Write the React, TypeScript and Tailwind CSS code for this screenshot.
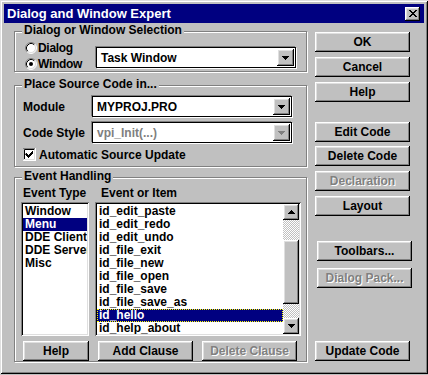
import React from 'react';

const raised =
  'bg-[#c0c0c0] shadow-[inset_-1px_-1px_0_#000,inset_1px_1px_0_#fff,inset_-2px_-2px_0_#808080,inset_2px_2px_0_#dfdfdf]';
const sunken =
  'shadow-[inset_1px_1px_0_#808080,inset_-1px_-1px_0_#fff,inset_2px_2px_0_#000,inset_-2px_-2px_0_#dfdfdf]';
const checker =
  'bg-[image:repeating-conic-gradient(#fff_0_25%,#c0c0c0_0_50%)] bg-[length:2px_2px]';
const disabledText = 'text-[#808080] [text-shadow:1px_1px_0_#fff]';

function Arrow({ up, disabled }: { up?: boolean; disabled?: boolean }) {
  return (
    <svg width="7" height="4" viewBox="0 0 7 4" className={up ? 'rotate-180' : ''}>
      <path
        d="M0 0h7v1h-1v1h-1v1h-1v1h-1v-1h-1v-1h-1v-1h-1z"
        fill={disabled ? '#808080' : '#000'}
      />
    </svg>
  );
}

function Button({
  label,
  disabled,
  className = '',
}: {
  label: string;
  disabled?: boolean;
  className?: string;
}) {
  return (
    <div
      className={`flex h-[20px] items-center justify-center text-[12px] font-bold ${raised} ${
        disabled ? disabledText : 'text-black'
      } ${className}`}
    >
      {label}
    </div>
  );
}

function Group({
  title,
  className = '',
  children,
}: {
  title: string;
  className?: string;
  children: React.ReactNode;
}) {
  return (
    <div
      className={`relative border border-[#808080] shadow-[inset_1px_1px_0_#fff,1px_1px_0_#fff] ${className}`}
    >
      <span className="absolute -top-[9px] left-[7px] bg-[#c0c0c0] px-[2px] text-[12px] leading-[14px] font-bold">
        {title}
      </span>
      {children}
    </div>
  );
}

function Combo({
  value,
  disabled,
  className = '',
}: {
  value: string;
  disabled?: boolean;
  className?: string;
}) {
  return (
    <div
      className={`flex h-[21px] w-[200px] items-center border border-black bg-white shadow-[-1px_-1px_0_#808080,1px_1px_0_#fff] ${className}`}
    >
      <span
        className={`flex-1 pl-[4px] text-[12px] font-bold ${
          disabled ? 'text-[#808080]' : 'text-black'
        }`}
      >
        {value}
      </span>
      <div className={`mr-[1px] flex h-[17px] w-[17px] items-center justify-center ${raised}`}>
        <Arrow disabled={disabled} />
      </div>
    </div>
  );
}

function Radio({ label, checked }: { label: string; checked?: boolean }) {
  return (
    <div className="flex h-[16px] items-center gap-[1px] text-[12px] font-bold tracking-[-0.3px]">
      <svg width="12" height="12" viewBox="0 0 12 12">
        <circle cx="6" cy="6" r="5" fill="#fff" />
        <path d="M2.11 9.89A5.5 5.5 0 0 1 9.89 2.11" fill="none" stroke="#808080" />
        <path d="M9.89 2.11A5.5 5.5 0 0 1 2.11 9.89" fill="none" stroke="#fff" />
        <path d="M2.82 9.18A4.5 4.5 0 0 1 9.18 2.82" fill="none" stroke="#000" />
        <path d="M9.18 2.82A4.5 4.5 0 0 1 2.82 9.18" fill="none" stroke="#dfdfdf" />
        {checked && <circle cx="6" cy="6" r="2" fill="#000" />}
      </svg>
      <span>{label}</span>
    </div>
  );
}

const eventTypes = ['Window', 'Menu', 'DDE Client', 'DDE Server', 'Misc'];
const events = [
  'id_edit_paste',
  'id_edit_redo',
  'id_edit_undo',
  'id_file_exit',
  'id_file_new',
  'id_file_open',
  'id_file_save',
  'id_file_save_as',
  'id_hello',
  'id_help_about',
];

export default function App() {
  return (
    <div className="h-[375px] w-[428px] overflow-hidden bg-[#c0c0c0] font-['Liberation_Sans',Arial,sans-serif] text-black">
      <div className="flex h-[374px] w-[428px] flex-col px-[4px] pt-[4px] shadow-[inset_1px_1px_0_#dfdfdf,inset_-1px_-1px_0_#000,inset_2px_2px_0_#fff,inset_-2px_-2px_0_#808080]">
        {/* title bar */}
        <div className="flex h-[19px] items-center bg-[#000080] pl-[3px]">
          <span className="flex-1 text-[13px] font-bold text-white">Dialog and Window Expert</span>
          <div className={`mr-[4px] flex h-[14px] w-[15px] items-center justify-center ${raised}`}>
            <svg width="8" height="7" viewBox="0 0 8 7">
              <path
                d="M0 0h2v1h1v1h2v-1h1v-1h2v1h-1v1h-1v1h-1v1h1v1h1v1h1v1h-2v-1h-1v-1h-2v1h-1v1h-2v-1h1v-1h1v-1h1v-1h-1v-1h-1v-1h-1z"
                fill="#000"
              />
            </svg>
          </div>
        </div>

        <div className="flex">
          {/* left column */}
          <div className="ml-[10px] flex w-[293px] flex-col">
            <Group title="Dialog or Window Selection" className="mt-[8px] h-[41px]">
              <div className="flex pt-[8px] pl-[10px]">
                <div className="flex w-[71px] flex-col">
                  <Radio label="Dialog" />
                  <Radio label="Window" checked />
                </div>
                <Combo value="Task Window" className="mt-[7px]" />
              </div>
            </Group>

            <Group title="Place Source Code in..." className="mt-[13px] h-[82px]">
              <div className="flex flex-col gap-[5px] pt-[10px] pl-[8px] text-[12px] font-bold">
                <div className="flex items-center">
                  <span className="w-[69px]">Module</span>
                  <Combo value="MYPROJ.PRO" />
                </div>
                <div className="flex items-center">
                  <span className="w-[69px]">Code Style</span>
                  <Combo value="vpi_Init(...)" disabled />
                </div>
                <div className="flex h-[13px] items-center gap-[3px]">
                  <svg width="13" height="13" viewBox="0 0 13 13">
                    <rect x="0" y="0" width="13" height="13" fill="#fff" />
                    <path d="M0 12.5V0.5h12.5" fill="none" stroke="#808080" />
                    <path d="M0.5 13V12.5h12V0" fill="none" stroke="#fff" />
                    <path d="M1.5 11V1.5h10" fill="none" stroke="#000" />
                    <path d="M1.5 11.5h10v-10" fill="none" stroke="#dfdfdf" />
                    <path d="M3 5h1v1h1v1h1v-1h1v-1h1v-1h1v-1h1v3h-1v1h-1v1h-1v1h-1v1h-1v-1h-1v-1h-1v-1h-1z" fill="#000" />
                  </svg>
                  <span>Automatic Source Update</span>
                </div>
              </div>
            </Group>

            <Group title="Event Handling" className="mt-[10px] h-[185px]">
              <div className="flex flex-col pt-[9px] text-[12px] font-bold">
                <div className="flex h-[13px] items-center pl-[8px] leading-[13px]">
                  <span className="w-[78px]">Event Type</span>
                  <span>Event or Item</span>
                </div>
                <div className="mt-[2px] flex gap-[6px] pl-[6px]">
                  <div className={`h-[134px] w-[68px] bg-white p-[2px] ${sunken}`}>
                    <div className="overflow-hidden pt-[1px]">
                      {eventTypes.map((t) => (
                        <div
                          key={t}
                          className={`h-[13px] overflow-hidden px-[2px] leading-[13px] whitespace-nowrap ${
                            t === 'Menu' ? 'bg-[#000080] text-white' : ''
                          }`}
                        >
                          {t}
                        </div>
                      ))}
                    </div>
                  </div>
                  <div className={`flex h-[134px] w-[206px] bg-white p-[2px] ${sunken}`}>
                    <div className="flex-1 overflow-hidden pt-[1px]">
                      {events.map((e) => (
                        <div
                          key={e}
                          className={`h-[13px] px-[2px] leading-[13px] whitespace-nowrap ${
                            e === 'id_hello'
                              ? 'bg-[#000080] text-white outline-1 -outline-offset-1 outline-[#ffff00] outline-dotted'
                              : ''
                          }`}
                        >
                          {e}
                        </div>
                      ))}
                    </div>
                    <div className="flex w-[16px] flex-col">
                      <div className={`flex h-[16px] items-center justify-center ${raised}`}>
                        <Arrow up />
                      </div>
                      <div className={`h-[20px] ${checker}`} />
                      <div className={`h-[64px] ${raised}`} />
                      <div className={`h-[14px] ${checker}`} />
                      <div className={`flex h-[16px] items-center justify-center ${raised}`}>
                        <Arrow />
                      </div>
                    </div>
                  </div>
                </div>
                <div className="mt-[5px] flex pl-[8px]">
                  <Button label="Help" className="w-[66px]" />
                  <Button label="Add Clause" className="ml-[9px] w-[95px]" />
                  <Button label="Delete Clause" disabled className="ml-[9px] w-[95px]" />
                </div>
              </div>
            </Group>
          </div>

          {/* right column */}
          <div className="ml-[8px] flex w-[97px] flex-col">
            <Button label="OK" className="mt-[9px] w-[95px]" />
            <Button label="Cancel" className="mt-[5px] w-[95px]" />
            <Button label="Help" className="mt-[5px] w-[95px]" />
            <Button label="Edit Code" className="mt-[20px] w-[95px]" />
            <Button label="Delete Code" className="mt-[4px] w-[95px]" />
            <Button label="Declaration" disabled className="mt-[5px] w-[95px]" />
            <Button label="Layout" className="mt-[5px] w-[95px]" />
            <Button label="Toolbars..." className="mt-[25px] ml-[2px] w-[95px]" />
            <Button label="Dialog Pack..." disabled className="mt-[7px] ml-[2px] w-[95px]" />
            <Button label="Update Code" className="mt-[53px] w-[95px]" />
          </div>
        </div>
      </div>
    </div>
  );
}
